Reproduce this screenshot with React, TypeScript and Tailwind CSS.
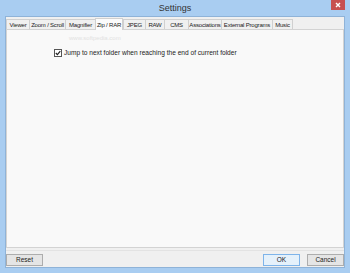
import React from "react";

const tabs = [
  { label: "Viewer", w: 23 },
  { label: "Zoom / Scroll", w: 36 },
  { label: "Magnifier", w: 30 },
  { label: "Zip / RAR", w: 28, active: true },
  { label: "JPEG", w: 22 },
  { label: "RAW", w: 19 },
  { label: "CMS", w: 24 },
  { label: "Associations", w: 33 },
  { label: "External Programs", w: 51 },
  { label: "Music", w: 20 },
];

export default function App() {
  return (
    <div
      className="w-[350px] h-[273px] bg-[#a9cdf1] flex flex-col overflow-hidden"
      style={{ fontFamily: '"Liberation Sans", Arial, sans-serif' }}
    >
      {/* title bar */}
      <div className="h-[16px] flex items-center relative shrink-0">
        <div className="flex-1 text-center text-[9px] text-[#333] leading-none pt-[1px]">Settings</div>
        <div className="absolute right-[5px] top-0 w-[14px] h-[10px] bg-[#c75050] flex items-center justify-center">
          <svg width="6" height="6" viewBox="0 0 6 6">
            <path d="M1 1L5 5M5 1L1 5" stroke="#fff" strokeWidth="1.4" />
          </svg>
        </div>
      </div>
      {/* client */}
      <div className="mx-[5px] mb-[5px] flex-1 bg-[#f0f0f0] border border-[#8fb3d8] flex flex-col">
        <div className="pt-[1px] flex flex-col flex-1">
          <div className="flex items-end h-[11px] relative z-10">
            {tabs.map((t) =>
              t.active ? (
                <div
                  key={t.label}
                  className="h-[12px] -mb-[1px] bg-[#fbfbfb] border border-[#d0d0d0] border-b-0 flex items-center justify-center text-[6px] tracking-[-0.2px] text-[#222] leading-none whitespace-nowrap shrink-0"
                  style={{ width: t.w }}
                >
                  {t.label}
                </div>
              ) : (
                <div
                  key={t.label}
                  className="h-[10px] bg-[#f0f0f0] border border-[#d0d0d0] border-b-0 -mr-[1px] flex items-center justify-center text-[6px] tracking-[-0.2px] text-[#222] leading-none whitespace-nowrap shrink-0 overflow-hidden"
                  style={{ width: t.w + 1 }}
                >
                  {t.label}
                </div>
              )
            )}
          </div>
          <div className="h-[219px] bg-[#f9f9f9] border border-[#d3d3d3] relative">
            <div className="absolute left-[62px] top-[5px] text-[6px] text-[#e2e2e2] leading-none">www.softpedia.com</div>
            <div className="pt-[19px] pl-[47px] flex items-center">
              <div className="w-[8px] h-[8px] border border-[#555] bg-white flex items-center justify-center">
                <svg width="6" height="6" viewBox="0 0 6 6">
                  <path d="M0.8 3L2.4 4.6L5.3 1.2" stroke="#222" strokeWidth="1.2" fill="none" />
                </svg>
              </div>
              <span className="text-[6.6px] text-[#222] leading-none ml-[2px] whitespace-nowrap">
                Jump to next folder when reaching the end of current folder
              </span>
            </div>
          </div>
          <div className="h-[1px] mt-[2px] bg-[#e3e3e3]" />
          <div className="flex items-center justify-between pt-[3px]">
            <div className="w-[37px] h-[12px] border border-[#adadad] bg-[#e5e5e5] flex items-center justify-center text-[6.5px] text-[#222] leading-none">
              Reset
            </div>
            <div className="flex gap-[7px]">
              <div className="w-[37px] h-[12px] border border-[#7eb4ea] bg-[#e5f1fb] flex items-center justify-center text-[6.5px] text-[#222] leading-none">
                OK
              </div>
              <div className="w-[37px] h-[12px] border border-[#adadad] bg-[#e5e5e5] flex items-center justify-center text-[6.5px] text-[#222] leading-none">
                Cancel
              </div>
            </div>
          </div>
        </div>
      </div>
    </div>
  );
}
